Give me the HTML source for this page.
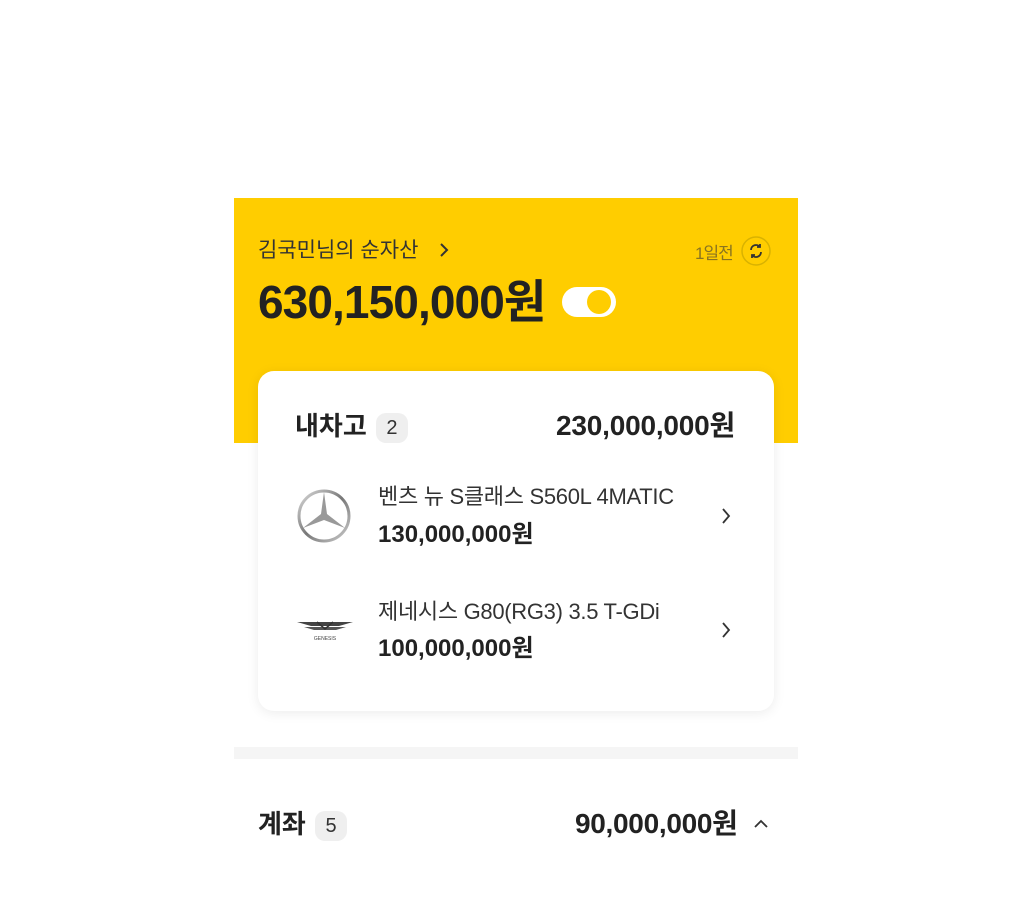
<!DOCTYPE html>
<html><head><meta charset="utf-8"><style>
*{margin:0;padding:0;box-sizing:border-box}
body{width:1029px;height:900px;background:#fff;font-family:"Liberation Sans","Noto Sans CJK KR",sans-serif;color:#222;position:relative;overflow:hidden}
.a{position:absolute;white-space:nowrap}
.y{position:absolute;left:234px;top:198px;width:564px;height:245px;background:#FFCD00}
.card{position:absolute;left:258px;top:371px;width:516px;height:340px;background:#fff;border-radius:16px;box-shadow:0 2px 12px rgba(0,0,0,.08)}
.badge{display:inline-block;background:#efefef;border-radius:10px;width:32px;height:30px;text-align:center;line-height:30px;font-size:20px;font-weight:400;color:#333;vertical-align:middle}
</style></head><body>
<div class="y"></div>
<div class="a" style="left:258px;top:234px;font-size:21px;color:#333">김국민님의 순자산</div>
<svg class="a" style="left:438px;top:242px" width="12" height="16"><path d="M3 2l6 6-6 6" stroke="#333" stroke-width="2" fill="none"/></svg>
<div class="a" style="left:695px;top:239px;font-size:17px;color:#8a7420;letter-spacing:-1px">1일전</div>
<svg class="a" style="left:740px;top:235px" width="32" height="32"><circle cx="16" cy="16" r="14" fill="none" stroke="#d9b200" stroke-width="1.5"/><path d="M11 15a5 5 0 0 1 9-3M21 17a5 5 0 0 1-9 3" stroke="#333" stroke-width="1.8" fill="none"/><path d="M20 9v3h-3M12 23v-3h3" stroke="#333" stroke-width="1.8" fill="none"/></svg>
<div class="a" style="left:258px;top:279px;font-size:46px;line-height:46px;font-weight:700;color:#222;letter-spacing:-.9px">630,150,000원</div>
<div class="a" style="left:562px;top:287px;width:54px;height:30px;border-radius:15px;background:#fff"></div>
<div class="a" style="left:587px;top:290px;width:24px;height:24px;border-radius:50%;background:#FFCD00"></div>
<div class="card"></div>
<div class="a" style="left:295px;top:406px;font-size:26px;font-weight:700">내차고 <span class="badge" style="margin-left:2px">2</span></div>
<div class="a" style="left:556px;top:404px;font-size:28px;font-weight:700;letter-spacing:-.2px">230,000,000원</div>
<svg class="a" style="left:296px;top:488px" width="56" height="56"><defs><linearGradient id="g" x1="0" y1="0" x2="1" y2="1"><stop offset="0" stop-color="#ddd"/><stop offset=".5" stop-color="#777"/><stop offset="1" stop-color="#ccc"/></linearGradient></defs><circle cx="28" cy="28" r="25" fill="none" stroke="url(#g)" stroke-width="3"/><path d="M28 4L31 26 49 40 28 32 7 40 25 26Z" fill="#999"/></svg>
<div class="a" style="left:378px;top:479px;font-size:22px;color:#333;letter-spacing:-.3px">벤츠 뉴 S클래스 S560L 4MATIC</div>
<div class="a" style="left:378px;top:514px;font-size:24px;font-weight:700">130,000,000원</div>
<svg class="a" style="left:720px;top:507px" width="12" height="18"><path d="M3 2l6 7-6 7" stroke="#333" stroke-width="1.8" fill="none"/></svg>
<svg class="a" style="left:296px;top:616px" width="58" height="28"><path d="M1 6h56l-14 4H15z" fill="#444"/><path d="M8 11h42l-10 3H18z" fill="#555"/><path d="M21 6l8 7 8-7" stroke="#333" stroke-width="1.5" fill="none"/><text x="29" y="24" font-size="5" text-anchor="middle" fill="#444">GENESIS</text></svg>
<div class="a" style="left:378px;top:594px;font-size:22px;color:#333;letter-spacing:-.3px">제네시스 G80(RG3) 3.5 T-GDi</div>
<div class="a" style="left:378px;top:628px;font-size:24px;font-weight:700">100,000,000원</div>
<svg class="a" style="left:720px;top:621px" width="12" height="18"><path d="M3 2l6 7-6 7" stroke="#333" stroke-width="1.8" fill="none"/></svg>
<div class="a" style="left:234px;top:747px;width:564px;height:12px;background:#f5f5f5"></div>
<div class="a" style="left:258px;top:804px;font-size:26px;font-weight:700">계좌 <span class="badge" style="margin-left:2px">5</span></div>
<div class="a" style="left:575px;top:802px;font-size:28px;font-weight:700;letter-spacing:-.3px">90,000,000원</div>
<svg class="a" style="left:753px;top:818px" width="16" height="12"><path d="M2 9l6-6 6 6" stroke="#333" stroke-width="1.8" fill="none"/></svg>
</body></html>
